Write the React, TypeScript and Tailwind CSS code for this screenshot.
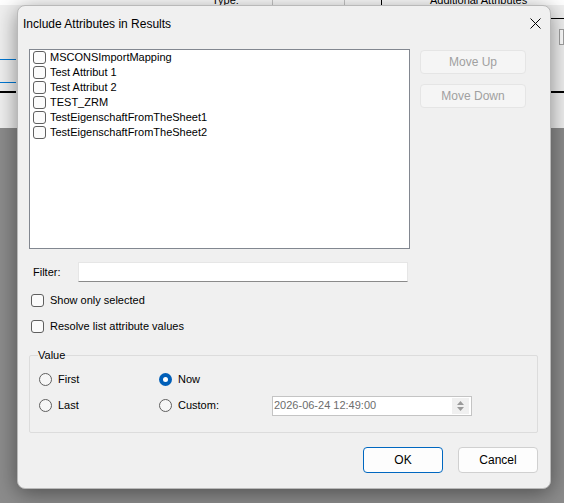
import React from "react";

const items = [
  "MSCONSImportMapping",
  "Test Attribut 1",
  "Test Attribut 2",
  "TEST_ZRM",
  "TestEigenschaftFromTheSheet1",
  "TestEigenschaftFromTheSheet2",
];

const sans = "font-['Liberation_Sans',Arial,sans-serif]";

function Check() {
  return <span className="block h-[13px] w-[13px] shrink-0 rounded-[3px] border border-[#5f5f5f] bg-[#fbfbfb]" />;
}

function Radio({ checked, label }: { checked?: boolean; label: string }) {
  return (
    <div className="flex items-center gap-[6px]">
      {checked ? (
        <span className="flex h-[13px] w-[13px] items-center justify-center rounded-full bg-[#005fb8]">
          <span className="h-[5px] w-[5px] rounded-full bg-white" />
        </span>
      ) : (
        <span className="h-[13px] w-[13px] rounded-full border border-[#5f5f5f] bg-[#f6f6f6]" />
      )}
      <span className="text-[11px] leading-none text-black">{label}</span>
    </div>
  );
}

function Backdrop() {
  return (
    <div className="flex h-[503px] w-[564px] flex-col">
      {/* host window behind the dialog */}
      <div className="relative h-[128px] bg-[#f0f0f0]">
        <div className="absolute left-0 top-0 h-[5px] w-full bg-white" />
        <span className={`${sans} absolute left-[212px] top-[-6px] text-[11px] leading-[12px] text-black`}>Type:</span>
        <div className="absolute left-[272px] top-0 h-[5px] w-px bg-[#c8c8c8]" />
        <div className="absolute left-[344px] top-0 h-[5px] w-px bg-[#c8c8c8]" />
        <div className="absolute left-[381px] top-0 h-[14px] w-px bg-black" />
        <span className={`${sans} absolute left-[430px] top-[-6px] text-[11px] leading-[12px] text-black`}>
          Additional Attributes
        </span>
        <div className="absolute left-0 top-[59px] h-px w-[16px] bg-[#0078d4]" />
        <div className="absolute left-0 top-[82px] h-px w-[16px] bg-[#0078d4]" />
        <div className="absolute left-0 top-[91px] h-[2px] w-[16px] bg-black" />
        <div className="absolute right-0 top-[18px] h-px w-[14px] bg-black" />
        <div className="absolute right-0 top-[29px] h-[16px] w-[5px] border border-[#a0a0a0] bg-white" />
        <div className="absolute right-0 top-[91px] h-[2px] w-[14px] bg-black" />
      </div>
      <div className="flex-1 bg-[#8c8c8c]" />
    </div>
  );
}

export default function App() {
  return (
    <div className="relative h-[503px] w-[564px] overflow-hidden">
      <Backdrop />

      {/* Include Attributes dialog */}
      <div
        className={`${sans} absolute left-[17px] top-[5px] flex h-[484px] w-[534px] flex-col rounded-[8px] border border-[#b9b9b9] bg-[#f0f0f0] shadow-[0_4px_22px_rgba(0,0,0,0.45)]`}
      >
        <div className="flex h-[35px] items-center justify-between pl-[5px] pr-[9px]">
          <span className="text-[12px] text-black">Include Attributes in Results</span>
          <svg width="11" height="11" viewBox="0 0 11 11" className="text-black">
            <path d="M0.5 0.5 L10.5 10.5 M10.5 0.5 L0.5 10.5" stroke="currentColor" strokeWidth="1" />
          </svg>
        </div>

        <div className="flex flex-col px-[11px] pt-[8px]">
          <div className="flex gap-[10px]">
            <div className="flex h-[200px] w-[381px] flex-col border border-[#828790] bg-white pl-[3px]">
              {items.map((it) => (
                <div key={it} className="flex h-[15px] items-center gap-[4px]">
                  <Check />
                  <span className="text-[11px] leading-none text-black">{it}</span>
                </div>
              ))}
            </div>
            <div className="flex flex-col gap-[10px] pt-[1px]">
              <button className="h-[24px] w-[106px] rounded-[4px] border border-[#e5e5e5] bg-[#f5f5f5] text-[12px] text-[#a0a0a0]">
                Move Up
              </button>
              <button className="h-[24px] w-[106px] rounded-[4px] border border-[#e5e5e5] bg-[#f5f5f5] text-[12px] text-[#a0a0a0]">
                Move Down
              </button>
            </div>
          </div>

          <div className="mt-[13px] flex items-center">
            <span className="w-[49px] pl-[4px] text-[11px] text-black">Filter:</span>
            <div className="h-[20px] w-[330px] border-x border-t border-b border-[#e6e6e6] border-b-[#8a8a8a] bg-white" />
          </div>

          <div className="mt-[12px] flex items-center gap-[6px] pl-[2px]">
            <Check />
            <span className="text-[11px] leading-none text-black">Show only selected</span>
          </div>
          <div className="mt-[13px] flex items-center gap-[6px] pl-[2px]">
            <Check />
            <span className="text-[11px] leading-none text-black">Resolve list attribute values</span>
          </div>

          <fieldset className="mt-[14px] h-[86px] w-[509px] rounded-[2px] border border-[#dcdcdc] pl-[9px] pt-[3px]">
            <legend className="ml-[-1px] text-[11px] text-black">Value</legend>
            <div className="grid grid-cols-[120px_113px_1fr] grid-rows-[26px_26px] items-center">
              <Radio label="First" />
              <Radio checked label="Now" />
              <div />
              <Radio label="Last" />
              <Radio label="Custom:" />
              <div className="flex h-[20px] w-[200px] items-center justify-between border border-[#c4c4c4] bg-white pl-[1px] pr-[2px]">
                <span className="text-[11px] text-[#6d6d6d]">2026-06-24 12:49:00</span>
                <div className="flex h-[16px] w-[17px] flex-col items-center justify-center gap-[2px] bg-[#f0f0f0]">
                  <svg width="7" height="4" viewBox="0 0 7 4">
                    <path d="M0 4 L3.5 0 L7 4 Z" fill="#9a9a9a" />
                  </svg>
                  <svg width="7" height="4" viewBox="0 0 7 4">
                    <path d="M0 0 L3.5 4 L7 0 Z" fill="#9a9a9a" />
                  </svg>
                </div>
              </div>
            </div>
          </fieldset>

          <div className="mt-[14px] flex justify-end gap-[15px] pr-[1px]">
            <button className="h-[26px] w-[80px] rounded-[4px] border border-[#0067c0] bg-[#fdfdfd] text-[12px] text-black">
              OK
            </button>
            <button className="h-[26px] w-[80px] rounded-[4px] border border-[#d0d0d0] bg-[#fdfdfd] text-[12px] text-black">
              Cancel
            </button>
          </div>
        </div>
      </div>
    </div>
  );
}
